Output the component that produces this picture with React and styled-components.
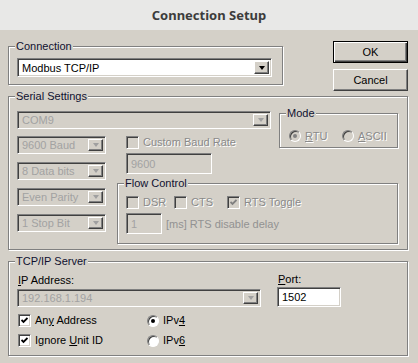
import React from 'react'
import styled, { createGlobalStyle, css } from 'styled-components'

const GlobalStyle = createGlobalStyle`
  html, body {
    margin: 0;
    padding: 0;
    background: #d4d0c8;
  }
  body {
    font-family: "Liberation Sans", Arial, sans-serif;
    font-size: 11px;
    color: #000;
  }
`

const Window = styled.div`
  width: 418px;
  height: 363px;
  background: #d4d0c8;
  overflow: hidden;
`

const TitleBar = styled.div`
  height: 30px;
  background: #e8e8e7;
  display: flex;
  align-items: center;
  justify-content: center;
  font-family: "Noto Sans", "DejaVu Sans", sans-serif;
  font-weight: 700;
  font-size: 13px;
  color: #3c3c3c;
`

const Body = styled.div`
  padding: 11px 10px 0 8px;
`

const TopRow = styled.div`
  display: flex;
  align-items: flex-start;
`

const ButtonColumn = styled.div`
  margin-left: auto;
  display: flex;
  flex-direction: column;
  gap: 6px;
`

const Button = styled.button`
  box-sizing: border-box;
  width: 75px;
  height: 22px;
  padding: 0;
  font: inherit;
  color: #000;
  background: #d4d0c8;
  border: 1px solid;
  border-color: #fff #404040 #404040 #fff;
  box-shadow: inset -1px -1px 0 #808080;
  ${p => p.$default && css`
    border: 1px solid #000;
    box-shadow: inset 1px 1px 0 #fff, inset -1px -1px 0 #404040, inset -2px -2px 0 #808080;
  `}
`

/* etched group box */
const Group = styled.div`
  position: relative;
  box-sizing: border-box;
  border: 1px solid #808080;
  box-shadow: inset 1px 1px 0 #fff, 1px 1px 0 #fff;
`

const GroupLabel = styled.span`
  position: absolute;
  top: -7px;
  left: 6px;
  padding: 0 1px;
  line-height: 13px;
  background: #d4d0c8;
  color: #101030;
`

const ConnectionGroup = styled(Group)`
  width: 275px;
  margin-top: 5px;
  padding: 11px 0 7px 8px;
`

const SerialGroup = styled(Group)`
  margin-top: 5px;
  padding: 14px 0 5px 8px;
`

const SerialGrid = styled.div`
  display: grid;
  grid-template-columns: 100px 162px 119px;
  grid-template-areas:
    "com com mode"
    "left mid mode"
    "left flow flow";
  align-items: start;
`

const ComCell = styled.div`
  grid-area: com;
`

const LeftStack = styled.div`
  grid-area: left;
  display: flex;
  flex-direction: column;
  gap: 8px;
  padding-top: 7px;
`

const MidStack = styled.div`
  grid-area: mid;
  display: flex;
  flex-direction: column;
  align-items: flex-start;
  gap: 4px;
  padding: 7px 0 0 9px;
`

const ModeGroup = styled(Group)`
  grid-area: mode;
  height: 35px;
  margin-top: 2px;
  padding: 11px 0 0 9px;
  display: flex;
`

const FlowGroup = styled(Group)`
  grid-area: flow;
  margin-top: 9px;
  padding: 12px 0 9px 8px;
  display: flex;
  flex-direction: column;
  gap: 4px;
`

const Row = styled.div`
  display: flex;
  align-items: center;
  gap: ${p => p.$gap || 0}px;
`

const TcpGroup = styled(Group)`
  margin-top: 11px;
  padding: 11px 0 8px 8px;
`

const FieldColumn = styled.div`
  display: flex;
  flex-direction: column;
  align-items: flex-start;
  margin-left: ${p => p.$ml || 0}px;
  gap: ${p => p.$gap || 0}px;
`

const FieldLabel = styled.span`
  line-height: 13px;
  padding-left: 1px;
`

const OptionGrid = styled.div`
  display: grid;
  grid-template-columns: 129px auto;
  row-gap: 7px;
  margin: 7px 0 0 1px;
`

/* sunken controls */
const sunken = css`
  box-sizing: border-box;
  border: 1px solid;
  border-color: #808080 #fff #fff #808080;
  box-shadow: inset 1px 1px 0 #404040, inset -1px -1px 0 #d4d0c8;
`

const ComboBox = styled.div`
  ${sunken};
  display: flex;
  align-items: stretch;
  width: ${p => p.$w}px;
  height: ${p => p.$h || 18}px;
  padding: 2px;
  background: ${p => (p.$disabled ? '#d4d0c8' : '#fff')};
`

const ComboText = styled.span`
  flex: 1;
  display: flex;
  align-items: center;
  padding-left: 2px;
  white-space: nowrap;
  overflow: hidden;
  color: ${p => (p.$disabled ? '#a2a2a2' : '#000')};
`

const DropButton = styled.span`
  box-sizing: border-box;
  width: 15px;
  flex: none;
  display: flex;
  align-items: center;
  justify-content: center;
  background: #d4d0c8;
  border: 1px solid;
  border-color: #fff #404040 #404040 #fff;
  box-shadow: inset -1px -1px 0 #808080;

  &::after {
    content: "";
    border-left: 3.5px solid transparent;
    border-right: 3.5px solid transparent;
    border-top: 4px solid ${p => (p.$disabled ? '#a0a0a0' : '#000')};
  }
`

const Edit = styled.div`
  ${sunken};
  display: flex;
  align-items: center;
  width: ${p => p.$w}px;
  height: ${p => p.$h || 21}px;
  padding-left: 4px;
  background: ${p => (p.$disabled ? '#d4d0c8' : '#fff')};
  color: ${p => (p.$disabled ? '#a2a2a2' : '#000')};
`

const Option = styled.label`
  display: flex;
  align-items: center;
  gap: 4px;
  width: ${p => (p.$w ? `${p.$w}px` : 'auto')};
  line-height: 13px;
`

const Box = styled.span`
  ${sunken};
  width: 13px;
  height: 13px;
  flex: none;
  display: flex;
  align-items: center;
  justify-content: center;
  background: ${p => (p.$disabled ? '#d4d0c8' : '#fff')};
`

const RadioCircle = styled.span`
  box-sizing: border-box;
  width: 12px;
  height: 12px;
  flex: none;
  border-radius: 50%;
  border: 1px solid;
  border-color: #808080 #fff #fff #808080;
  box-shadow: inset 1px 1px 0 #404040;
  display: flex;
  align-items: center;
  justify-content: center;
  background: ${p => (p.$disabled ? '#d4d0c8' : '#fff')};

  &::after {
    content: "";
    display: ${p => (p.$checked ? 'block' : 'none')};
    width: 4px;
    height: 4px;
    border-radius: 50%;
    background: ${p => (p.$disabled ? '#808080' : '#000')};
  }
`

const OptionText = styled.span`
  color: #000;
  ${p => p.$disabled && css`
    color: #8a8a8a;
    text-shadow: 1px 1px 0 #fff;
  `}
`

const HintText = styled.span`
  color: #929292;
`

const Check = ({ color }) => (
  <svg width="7" height="7" viewBox="0 0 7 7">
    <path d="M0.5 3 L2.5 5 L6.5 1" fill="none" stroke={color} strokeWidth="1.8" />
  </svg>
)

const Combo = ({ value, w, h, disabled }) => (
  <ComboBox $w={w} $h={h} $disabled={disabled}>
    <ComboText $disabled={disabled}>{value}</ComboText>
    <DropButton $disabled={disabled} />
  </ComboBox>
)

const CheckOption = ({ children, checked, disabled, w }) => (
  <Option $w={w}>
    <Box $disabled={disabled}>{checked && <Check color={disabled ? '#808080' : '#000'} />}</Box>
    <OptionText $disabled={disabled}>{children}</OptionText>
  </Option>
)

const RadioOption = ({ children, checked, disabled, w }) => (
  <Option $w={w}>
    <RadioCircle $checked={checked} $disabled={disabled} />
    <OptionText $disabled={disabled}>{children}</OptionText>
  </Option>
)

export default function App() {
  return (
    <Window>
      <GlobalStyle />
      <TitleBar>Connection Setup</TitleBar>
      <Body>
        <TopRow>
          <ConnectionGroup>
            <GroupLabel>Connection</GroupLabel>
            <Combo value="Modbus TCP/IP" w={255} h={19} />
          </ConnectionGroup>
          <ButtonColumn>
            <Button $default>OK</Button>
            <Button>Cancel</Button>
          </ButtonColumn>
        </TopRow>

        <SerialGroup>
          <GroupLabel>Serial Settings</GroupLabel>
          <SerialGrid>
            <ComCell>
              <Combo value="COM9" w={254} disabled />
            </ComCell>
            <ModeGroup>
              <GroupLabel>Mode</GroupLabel>
              <RadioOption checked disabled w={53}><u>R</u>TU</RadioOption>
              <RadioOption disabled><u>A</u>SCII</RadioOption>
            </ModeGroup>
            <LeftStack>
              <Combo value="9600 Baud" w={89} disabled />
              <Combo value="8 Data bits" w={89} disabled />
              <Combo value="Even Parity" w={89} disabled />
              <Combo value="1 Stop Bit" w={89} disabled />
            </LeftStack>
            <MidStack>
              <CheckOption disabled>Custom Baud Rate</CheckOption>
              <Edit $w={86} disabled $disabled>9600</Edit>
            </MidStack>
            <FlowGroup>
              <GroupLabel>Flow Control</GroupLabel>
              <Row>
                <CheckOption disabled w={48}>DSR</CheckOption>
                <CheckOption disabled w={53}>CTS</CheckOption>
                <CheckOption disabled checked>RTS Toggle</CheckOption>
              </Row>
              <Row $gap={4}>
                <Edit $w={36} $disabled>1</Edit>
                <HintText>[ms] RTS disable delay</HintText>
              </Row>
            </FlowGroup>
          </SerialGrid>
        </SerialGroup>

        <TcpGroup>
          <GroupLabel>TCP/IP Server</GroupLabel>
          <Row>
            <FieldColumn $gap={2}>
              <FieldLabel><u>I</u>P Address:</FieldLabel>
              <Combo value="192.168.1.194" w={244} disabled />
            </FieldColumn>
            <FieldColumn $ml={16} $gap={1}>
              <FieldLabel><u>P</u>ort:</FieldLabel>
              <Edit $w={64} $h={20}>1502</Edit>
            </FieldColumn>
          </Row>
          <OptionGrid>
            <CheckOption checked>An<u>y</u> Address</CheckOption>
            <RadioOption checked>IPv<u>4</u></RadioOption>
            <CheckOption checked>Ignore <u>U</u>nit ID</CheckOption>
            <RadioOption>IPv<u>6</u></RadioOption>
          </OptionGrid>
        </TcpGroup>
      </Body>
    </Window>
  )
}
